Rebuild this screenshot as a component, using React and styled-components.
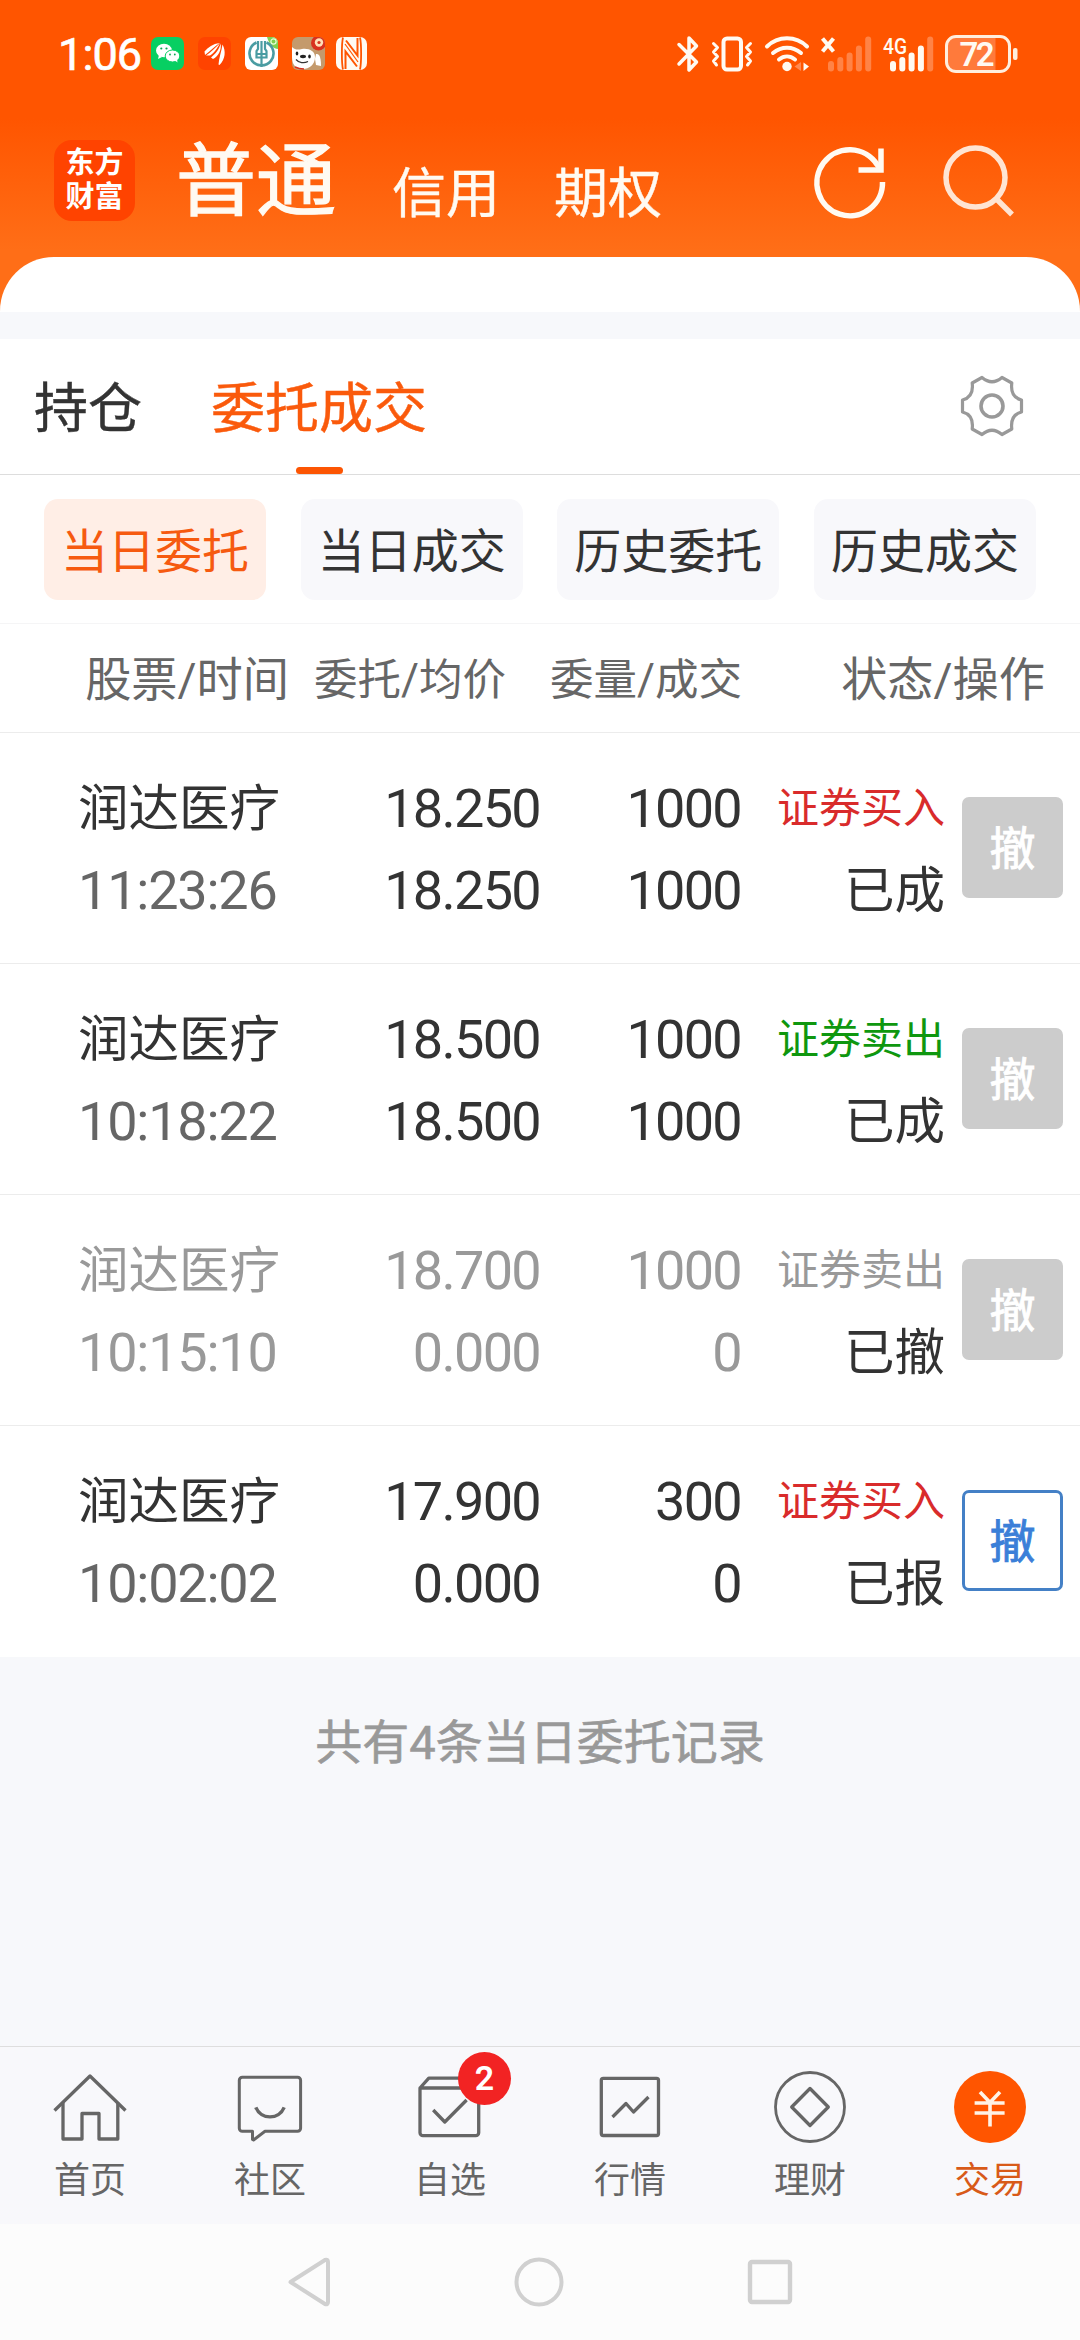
import React from 'react';
import styled, { createGlobalStyle } from 'styled-components';

const GlobalStyle = createGlobalStyle`
  * { box-sizing: border-box; }
  body {
    margin: 0;
    background: #fff;
    font-family: Roboto, "Noto Sans CJK SC", sans-serif;
    color: #333;
  }
  svg { display: block; flex: none; overflow: visible; }
`;

const Screen = styled.div`
  width: 1080px;
  height: 2340px;
  display: flex;
  flex-direction: column;
  overflow: hidden;
  background: #f7f8fb;
`;

const Hero = styled.header`
  height: 312px;
  display: flex;
  flex-direction: column;
  background: linear-gradient(#ff5500 0, #ff5500 118px, #ff6e17 250px);
`;

const StatusBar = styled.div`
  height: 107px;
  padding: 0 62px 0 58px;
  display: flex;
  align-items: center;
  justify-content: space-between;
`;

const StatusGroup = styled.div`
  display: flex;
  align-items: center;
`;

const Clock = styled.span`
  width: 93px;
  color: #fff;
  font-size: 45px;
  line-height: 50px;
  letter-spacing: -0.9px;
  padding-top: 2px;
  -webkit-text-stroke: 0.7px #fff;
`;

const AppIcons = styled.div`
  display: flex;
  gap: 14px;
`;

const Sys = styled.div`
  margin-left: ${(p) => p.$gap || 0}px;
`;

const TitleBar = styled.div`
  height: 150px;
  padding: 0 0 0 54px;
  display: flex;
  align-items: flex-start;
`;

const Logo = styled.div`
  width: 81px;
  height: 81px;
  margin-top: 33px;
  padding: 6px 0 0;
  border-radius: 18px;
  background: #ff4300;
  color: #fff;
  text-align: center;
  font-size: 29px;
  font-weight: 700;
  line-height: 34px;
`;

const TitleTab = styled.span`
  color: #fffaf2;
  white-space: nowrap;
  font-size: ${(p) => (p.$active ? 80 : 54)}px;
  line-height: 90px;
  margin-top: ${(p) => (p.$active ? 30 : 43)}px;
  margin-left: ${(p) => p.$left}px;
  -webkit-text-stroke: ${(p) => (p.$active ? 1.3 : 0.4)}px #fffaf2;
`;

const TitleActions = styled.div`
  display: flex;
  gap: 54px;
  margin: 34px 0 0 auto;
  padding-right: 62px;
`;

const Sheet = styled.div`
  height: 55px;
  border-radius: 54px 54px 0 0;
  background: #fff;
`;

const Panel = styled.main`
  margin-top: 27px;
  background: #fff;
`;

const Tabs = styled.nav`
  height: 136px;
  display: flex;
  align-items: flex-start;
  padding: 0 55px 0 34px;
  border-bottom: 1px solid #ddd;
`;

const Tab = styled.div`
  height: 135px;
  margin-right: 69px;
  padding-top: 31px;
  display: flex;
  flex-direction: column;
  justify-content: space-between;
  align-items: center;
  font-size: 54px;
  line-height: 80px;
  color: ${(p) => (p.$active ? '#fa5a0c' : '#333')};
  -webkit-text-stroke: 0.4px currentColor;

  &::after {
    content: "";
    width: 47px;
    height: 7px;
    border-radius: 4px;
    background: ${(p) => (p.$active ? '#fc5503' : 'transparent')};
  }
`;

const GearButton = styled.div`
  margin: 34px 0 0 auto;
`;

const Chips = styled.div`
  height: 149px;
  padding: 24px 44px;
  display: flex;
  justify-content: space-between;
  border-bottom: 1px solid #f5f5f6;
`;

const Chip = styled.div`
  width: 222px;
  height: 101px;
  border-radius: 14px;
  text-align: center;
  font-size: 47px;
  line-height: 106px;
  white-space: nowrap;
  background: ${(p) => (p.$active ? '#ffeee6' : '#f8f8fb')};
  color: ${(p) => (p.$active ? '#f65a10' : '#333')};
`;

const TableHead = styled.div`
  height: 109px;
  display: grid;
  grid-template-columns: 289px 217px 236px 303px;
  border-bottom: 1px solid #ececec;
  color: #666;
  text-align: right;
  line-height: 113px;
  white-space: nowrap;
`;

const HeadCell = styled.span`
  font-size: ${(p) => (p.$wide ? 46.2 : 43.5)}px;
`;

const Row = styled.div`
  height: 231px;
  padding-top: 35px;
  display: grid;
  grid-template-columns: 290px 250px 201px 204px 101px;
  border-bottom: 1px solid ${(p) => (p.$last ? 'transparent' : '#ececec')};
  color: ${(p) => (p.$dim ? '#999' : '#333')};
`;

const Cell = styled.div`
  display: flex;
  flex-direction: column;
  align-items: ${(p) => (p.$start ? 'flex-start' : 'flex-end')};
  padding-left: ${(p) => (p.$start ? 78 : 0)}px;
  line-height: 82px;
  white-space: nowrap;
`;

const Name = styled.span`
  font-size: 50.5px;
`;

const Num = styled.span`
  font-size: 54px;
  letter-spacing: -1.7px;
`;

const Time = styled.span`
  font-size: 54px;
  letter-spacing: -1.2px;
  color: ${(p) => (p.$dim ? 'inherit' : '#666')};
`;

const Side = styled.span`
  font-size: 42px;
  color: ${(p) => p.$color};
`;

const State = styled.span`
  font-size: 50.5px;
  color: #333;
`;

const CancelButton = styled.button`
  width: 101px;
  height: 101px;
  margin: 29px 0 0 17px;
  padding: 3px 0 0;
  border-radius: 7px;
  border: 3px solid ${(p) => (p.$enabled ? '#4480c6' : '#ccc')};
  background: ${(p) => (p.$enabled ? '#fff' : '#ccc')};
  color: ${(p) => (p.$enabled ? '#3b7fd8' : '#fff')};
  font: 400 46px/92px Roboto, "Noto Sans CJK SC", sans-serif;
  -webkit-text-stroke: 0.9px currentColor;
`;

const Summary = styled.p`
  flex: 1;
  margin: 0;
  padding-top: 45px;
  text-align: center;
  color: #999;
  font-size: 47px;
  line-height: 82px;
  -webkit-text-stroke: 0.6px currentColor;
`;

const BottomNav = styled.nav`
  height: 178px;
  display: grid;
  grid-template-columns: repeat(6, 180px);
  border-top: 1px solid #dedede;
  background: #f8f8fb;
`;

const NavItem = styled.div`
  position: relative;
  padding-top: 24px;
  display: flex;
  flex-direction: column;
  align-items: center;
  color: ${(p) => (p.$active ? '#d85a18' : '#666')};
  font-size: 36px;
  line-height: 44px;
  gap: 16px;
`;

const Badge = styled.span`
  position: absolute;
  left: 98px;
  top: 5px;
  width: 53px;
  height: 53px;
  border-radius: 50%;
  background: #f22323;
  color: #fff;
  text-align: center;
  font-size: 34px;
  font-weight: 600;
  line-height: 53px;
`;

const SystemNav = styled.div`
  height: 116px;
  padding: 0 287px;
  display: flex;
  align-items: center;
  justify-content: space-between;
  background: #fcfcfc;
`;

const WeChat = () => (
  <svg width="33" height="33" viewBox="0 0 33 33">
    <rect width="33" height="33" rx="7" fill="#07cf62" />
    <ellipse cx="13" cy="13.5" rx="8" ry="6.8" fill="#fff" />
    <path d="M8 18l-1 4 4-2z" fill="#fff" />
    <ellipse cx="21.5" cy="19" rx="7.3" ry="6" fill="#fff" stroke="#07cf62" strokeWidth="1" />
    <path d="M24 23.500l2.500 2-.5-3z" fill="#fff" />
    <g fill="#07a850">
      <circle cx="10.300" cy="11.500" r="1.100" />
      <circle cx="15.500" cy="11.500" r="1.100" />
      <circle cx="19" cy="17.500" r=".9" />
      <circle cx="23.800" cy="17.500" r=".9" />
    </g>
  </svg>
);

const Eastmoney = () => (
  <svg width="33" height="33" viewBox="0 0 33 33">
    <rect width="33" height="33" rx="7" fill="#ff4300" />
    <g fill="#fff">
      <path d="M6.500 14.500C10 10 15 7 21.500 6 17 9.500 12 14 7 18z" />
      <path d="M13 20.500C17.500 17 21.500 12 22.500 6.500 24 13 20 19.500 15 22z" />
      <path d="M20.500 27.500C21 21 23.500 14 24.500 7.500 28 14 27.500 22 21.500 28z" />
      <path d="M8 18.500C13 15 18 10 22 6 19 12 15 17 12 18.500z" />
    </g>
  </svg>
);

const AgriBank = () => (
  <svg width="33" height="33" viewBox="0 0 33 33">
    <rect width="33" height="33" rx="6" fill="#fff" />
    <path d="M22 0h5a6 6 0 0 1 6 6v6c-5 0-9-5-11-12z" fill="#7fd050" />
    <circle cx="28.500" cy="4.500" r="2.600" fill="none" stroke="#e6ffd8" strokeWidth="1.200" />
    <g fill="none" stroke="#4a9ca2">
      <path d="M11.500 5.500a12 12 0 1 0 10 0" strokeWidth="2.600" />
      <path d="M13 4v8l-1.500 2v6.500h10V14L20 12V4M16.500 4v26M11.500 17h10" strokeWidth="2.200" />
    </g>
  </svg>
);

const DogApp = () => (
  <svg width="33" height="33" viewBox="0 0 33 33">
    <defs>
      <clipPath id="dogClip"><rect width="33" height="33" rx="6" /></clipPath>
    </defs>
    <g clipPath="url(#dogClip)">
      <rect width="33" height="33" fill="#c49a6c" />
      <path d="M0 10c3 3 6 3 10 2 7-1 13 2 13 8 0 8-6 12-12 12S0 29 0 20z" fill="#fff" />
      <path d="M24 17c4-1 5 5 5 12l-5-1-1-6z" fill="#fff" />
      <circle cx="26.500" cy="6" r="7.500" fill="#d8321f" />
      <circle cx="27" cy="5.500" r="4.200" fill="#ffe1b8" />
      <circle cx="27" cy="5.500" r="1.600" fill="#d8321f" />
      <ellipse cx="5" cy="16.500" rx="1.300" ry="1.900" fill="#222" />
      <ellipse cx="17.500" cy="19.500" rx="1.300" ry="1.900" fill="#222" />
      <ellipse cx="11" cy="19.500" rx="3" ry="1.700" fill="#222" />
      <path d="M4 22.500c3 3.500 8 4 12 2" fill="none" stroke="#333" strokeWidth="1.300" />
      <path d="M3 30c4 2 7 2 9 2" stroke="#d8321f" strokeWidth="1.500" fill="none" />
    </g>
  </svg>
);

const Nfc = () => (
  <svg width="33" height="33" viewBox="0 0 33 33">
    <rect x="1" width="31" height="33" rx="7" fill="#fffaf2" />
    <g fill="none" stroke="#ff5500" strokeWidth="2">
      <path d="M10.500 32V14.500L22 29.500" />
      <path d="M22.500 1v17.500L11 3.500" />
      <path d="M8 32.500C6.500 26 6.500 7 8 .5M25 .5c1.500 6.500 1.500 25.500 0 32" strokeWidth="1.800" />
      <path d="M10 7l13 18" strokeWidth="1.200" />
    </g>
  </svg>
);

const Bluetooth = () => (
  <svg width="22" height="36" viewBox="0 0 22 36" fill="none" stroke="#fffaf2" strokeWidth="3.500" strokeLinejoin="round" strokeLinecap="round">
    <path d="M2 8.500L19.500 26 12 34V2l7.500 8L2 28" />
  </svg>
);

const Vibrate = () => (
  <svg width="42" height="36" viewBox="0 0 42 36" fill="none" stroke="#fffaf2" strokeLinejoin="round" strokeLinecap="round">
    <rect x="12.500" y="2.500" width="17.500" height="31" rx="3.500" strokeWidth="4" />
    <path d="M2.500 7.500l4 4-4 4.500 4 4.500-4 4.500 3 4M39.500 7.500l-4 4 4 4.500-4 4.500 4 4.500-3 4" strokeWidth="3" />
  </svg>
);

const Wifi = () => (
  <svg width="44" height="36" viewBox="0 0 44 36" fill="none" stroke="#fffaf2" strokeWidth="4" strokeLinecap="round">
    <path d="M2 10.500C13-.5 31-.5 42 10.500M8 17c8.500-7 19.500-7 28 0M14 23.500c5-4 11-4 16 0" />
    <circle cx="22" cy="30.500" r="4.700" fill="#fffaf2" stroke="none" />
    <path d="M36 26v9l-6.500-4.500z" fill="#ff8a52" stroke="none" />
    <path d="M38.500 26.500v8.500l5.500-4.500z" fill="#fffaf2" stroke="none" />
  </svg>
);

const barHeights = [10.500, 14.500, 19, 26, 35];

const SignalText = styled.text`
  font: 500 22px Roboto, sans-serif;
`;

const Signal = ({ level, label, offset }) => (
  <svg width="50" height="36" viewBox="0 0 50 36">
    {barHeights.map((h, i) => (
      <rect key={h} x={offset + i * 9.300} y={35.500 - h} width="6" height={h} rx="3" fill={i < level ? '#fffaf2' : '#ff8346'} />
    ))}
    {label ? (
      <SignalText x="0" y="17.500" fill="#fffaf2" textLength="24" lengthAdjust="spacingAndGlyphs">{label}</SignalText>
    ) : (
      <path d="M1.500 2.500l11 13M12.500 2.500l-11 13" stroke="#fffaf2" strokeWidth="4" />
    )}
  </svg>
);

const BatteryText = styled.text`
  font: 600 33px Roboto, sans-serif;
`;

const Battery = () => (
  <svg width="73" height="38" viewBox="0 0 73 38">
    <path d="M11 2h39.500v34H11a9 9 0 0 1-9-9V11a9 9 0 0 1 9-9z" fill="#ff7a3b" />
    <rect x="1.500" y="1.500" width="63" height="35" rx="9.500" fill="none" stroke="#ffeedd" strokeWidth="3" />
    <rect x="68" y="13" width="4.500" height="12" rx="2" fill="#ffeedd" />
    <BatteryText x="32" y="30.500" textAnchor="middle" fill="#fffaf2" textLength="35">72</BatteryText>
  </svg>
);

const Refresh = () => (
  <svg width="76" height="76" viewBox="0 0 76 76" fill="none" stroke="#fffaf2" strokeWidth="5.500">
    <path d="M70.500 41a32.800 33 0 1 1-5.500-17.500l4 5" />
    <path d="M69 7.500v21.500H46.500" />
  </svg>
);

const Search = () => (
  <svg width="76" height="76" viewBox="0 0 76 76" fill="none" stroke="#ffe4d2" strokeWidth="5.500">
    <circle cx="33.500" cy="36.600" r="29.500" />
    <path d="M54 57.500l16 16" />
  </svg>
);

const Gear = () => (
  <svg width="66" height="66" viewBox="-33 -33 66 66" fill="none" stroke="#999" strokeWidth="3.200" strokeLinejoin="round">
    <path d="M-10-28.500Q0-20 10-28.500L19.800-23Q18-9 29.500-6V6Q18 9 19.800 23L10 28.500Q0 20-10 28.500L-19.800 23Q-18 9-29.500 6V-6Q-18-9-19.800-23Z" />
    <circle r="11" strokeWidth="3.600" />
  </svg>
);

const NavSvg = ({ children }) => (
  <svg width="72" height="72" viewBox="0 0 72 72" fill="none" stroke="#666" strokeWidth="3.300" strokeLinejoin="round">
    {children}
  </svg>
);

const navItems = [
  {
    label: '首页',
    icon: (
      <>
        <path d="M.5 39.500L36 5l35.500 34.500" />
        <path d="M9 31.700V68h19V42.500h17V68h18.800V31.700" />
      </>
    ),
  },
  {
    label: '社区',
    icon: (
      <>
        <path d="M8.300 6.300h55.300a3 3 0 0 1 3 3v48a3 3 0 0 1-3 3H31L19.500 69l-1-.5v-8.200H8.300a3 3 0 0 1-3-3v-48a3 3 0 0 1 3-3z" strokeWidth="3" />
        <path d="M21.800 36.300C27 49 45 49 50.200 36.300" strokeWidth="3.400" />
      </>
    ),
  },
  {
    label: '自选',
    badge: '2',
    icon: (
      <>
        <path d="M6 17h58.700v44.700a3 3 0 0 1-3 3H9a3 3 0 0 1-3-3zM6 17l8.800-9.800H56L64.700 17" />
        <path d="M19.200 39l11.600 12L52.600 29" />
      </>
    ),
  },
  {
    label: '行情',
    icon: (
      <>
        <rect x="7.300" y="7.300" width="57.200" height="57.200" rx="2" />
        <path d="M18.500 46L32 32.500l7.500 8.500 15-15" />
      </>
    ),
  },
  {
    label: '理财',
    icon: (
      <>
        <circle cx="36" cy="36" r="34.500" strokeWidth="2.800" />
        <path d="M36 17.500L54.300 36 36 54.500 17.700 36z" />
      </>
    ),
  },
  {
    label: '交易',
    active: true,
    icon: (
      <>
        <circle cx="36" cy="36" r="36" fill="#ff5500" stroke="none" />
        <path d="M26 21l10 10.500L46 21M20.600 32h30M20.600 42h30M36 31v24.500" stroke="#fff3e6" strokeWidth="3.600" />
      </>
    ),
  },
];

const BUY = '#d92b2b';
const SELL = '#0f970f';

const orders = [
  { time: '11:23:26', price: '18.250', avg: '18.250', qty: '1000', done: '1000', side: '证券买入', color: BUY, state: '已成' },
  { time: '10:18:22', price: '18.500', avg: '18.500', qty: '1000', done: '1000', side: '证券卖出', color: SELL, state: '已成' },
  { time: '10:15:10', price: '18.700', avg: '0.000', qty: '1000', done: '0', side: '证券卖出', color: '#999', state: '已撤', dim: true },
  { time: '10:02:02', price: '17.900', avg: '0.000', qty: '300', done: '0', side: '证券买入', color: BUY, state: '已报', open: true },
];

export default function App() {
  return (
    <Screen>
      <GlobalStyle />
      <Hero>
        <StatusBar>
          <StatusGroup>
            <Clock>1:06</Clock>
            <AppIcons>
              <WeChat />
              <Eastmoney />
              <AgriBank />
              <DogApp />
            </AppIcons>
            <Sys $gap={10}><Nfc /></Sys>
          </StatusGroup>
          <StatusGroup>
            <Bluetooth />
            <Sys $gap={12}><Vibrate /></Sys>
            <Sys $gap={12}><Wifi /></Sys>
            <Sys $gap={12}><Signal level={0} offset={7} /></Sys>
            <Sys $gap={12}><Signal level={4} offset={7} label="4G" /></Sys>
            <Sys $gap={12}><Battery /></Sys>
          </StatusGroup>
        </StatusBar>
        <TitleBar>
          <Logo>东方<br />财富</Logo>
          <TitleTab $active $left={41}>普通</TitleTab>
          <TitleTab $left={56}>信用</TitleTab>
          <TitleTab $left={54}>期权</TitleTab>
          <TitleActions>
            <Refresh />
            <Search />
          </TitleActions>
        </TitleBar>
        <Sheet />
      </Hero>

      <Panel>
        <Tabs>
          <Tab>持仓</Tab>
          <Tab $active>委托成交</Tab>
          <GearButton><Gear /></GearButton>
        </Tabs>
        <Chips>
          <Chip $active>当日委托</Chip>
          <Chip>当日成交</Chip>
          <Chip>历史委托</Chip>
          <Chip>历史成交</Chip>
        </Chips>
        <TableHead>
          <HeadCell $wide>股票/时间</HeadCell>
          <HeadCell>委托/均价</HeadCell>
          <HeadCell>委量/成交</HeadCell>
          <HeadCell $wide>状态/操作</HeadCell>
        </TableHead>
        {orders.map((o, i) => (
          <Row key={o.time} $dim={o.dim} $last={i === orders.length - 1}>
            <Cell $start>
              <Name>润达医疗</Name>
              <Time $dim={o.dim}>{o.time}</Time>
            </Cell>
            <Cell>
              <Num>{o.price}</Num>
              <Num>{o.avg}</Num>
            </Cell>
            <Cell>
              <Num>{o.qty}</Num>
              <Num>{o.done}</Num>
            </Cell>
            <Cell>
              <Side $color={o.color}>{o.side}</Side>
              <State>{o.state}</State>
            </Cell>
            <CancelButton $enabled={o.open}>撤</CancelButton>
          </Row>
        ))}
      </Panel>

      <Summary>共有4条当日委托记录</Summary>

      <BottomNav>
        {navItems.map((n) => (
          <NavItem key={n.label} $active={n.active}>
            <NavSvg>{n.icon}</NavSvg>
            {n.badge && <Badge>{n.badge}</Badge>}
            {n.label}
          </NavItem>
        ))}
      </BottomNav>

      <SystemNav>
        <svg width="44" height="50" viewBox="0 0 44 50" fill="none" stroke="#d0d0d0" strokeWidth="4" strokeLinejoin="round">
          <path d="M3.500 25L38 3q3-1 3 2v40q0 3-3 2z" />
        </svg>
        <svg width="50" height="50" viewBox="0 0 50 50" fill="none" stroke="#d0d0d0" strokeWidth="4">
          <circle cx="25" cy="25" r="22.500" />
        </svg>
        <svg width="46" height="46" viewBox="0 0 46 46" fill="none" stroke="#d0d0d0" strokeWidth="4.400">
          <rect x="3" y="3" width="40" height="40" rx="2" />
        </svg>
      </SystemNav>
    </Screen>
  );
}
